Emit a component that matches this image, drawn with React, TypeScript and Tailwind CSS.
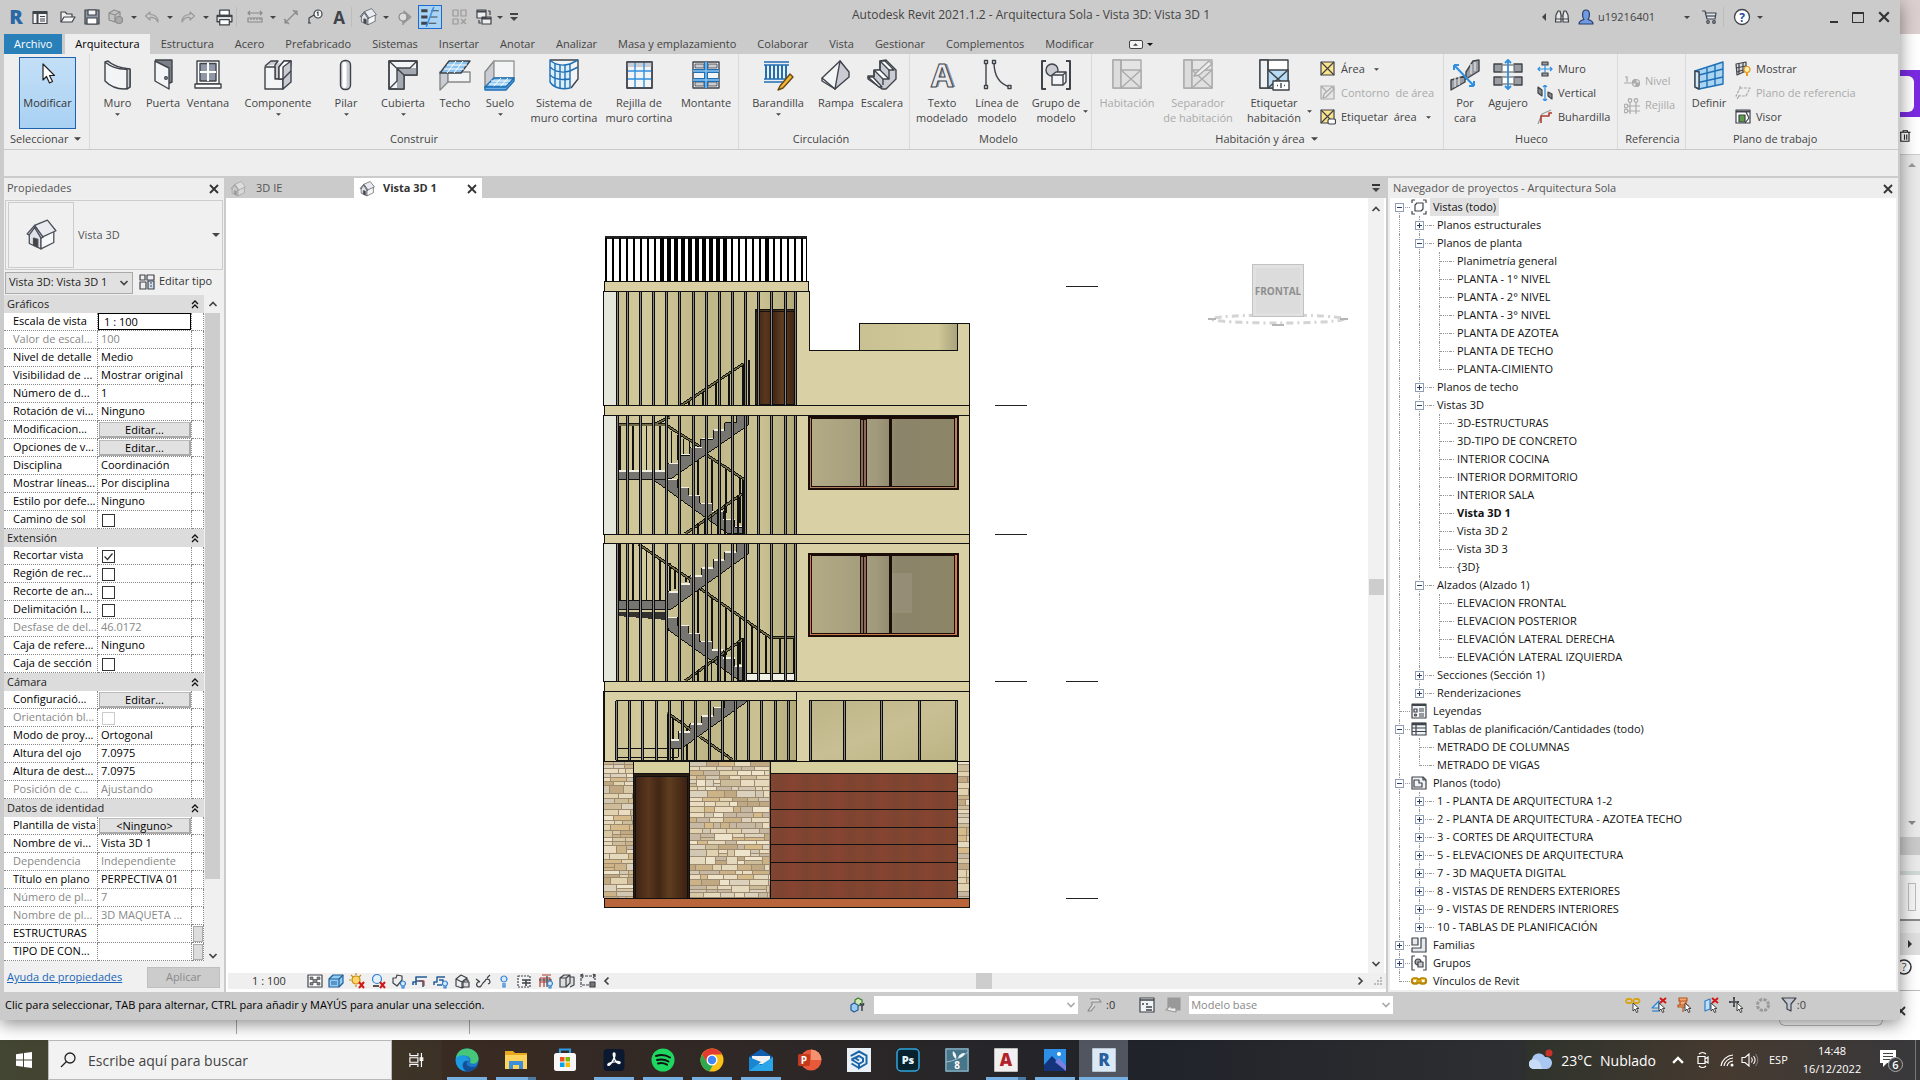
import React from "react";

type Kids = { children?: React.ReactNode };

const K = "#3f434a";
const B = "#1f6fb5";

function Big({ children }: Kids) {
  return (
    <svg viewBox="0 0 32 32" className="h-8 w-8 shrink-0" fill="none" stroke={K} strokeWidth="1.4" strokeLinejoin="round" aria-hidden="true">
      {children}
    </svg>
  );
}

function Sm({ children, className = "h-4 w-4" }: Kids & { className?: string }) {
  return (
    <svg viewBox="0 0 16 16" className={"shrink-0 " + className} fill="none" stroke={K} strokeWidth="1.2" strokeLinejoin="round" aria-hidden="true">
      {children}
    </svg>
  );
}

function Caret({ className = "h-[3px] w-[6px]", color = "#444" }: { className?: string; color?: string }) {
  return (
    <svg viewBox="0 0 6 3" className={"shrink-0 " + className} aria-hidden="true">
      <path d="M0 0h6L3 3z" fill={color} />
    </svg>
  );
}

function Cross({ className = "h-[10px] w-[10px]" }: { className?: string }) {
  return (
    <svg viewBox="0 0 10 10" className={"shrink-0 " + className} aria-hidden="true">
      <path d="M1 1l8 8M9 1L1 9" stroke="#333" strokeWidth="1.8" fill="none" />
    </svg>
  );
}

function Chevron({ dir, className = "h-[10px] w-[10px]", color = "#444" }: { dir: "up" | "down" | "left" | "right"; className?: string; color?: string }) {
  const d = { up: "M1.5 7L5 3.5 8.5 7", down: "M1.5 3L5 6.5 8.5 3", left: "M6.5 1.5L3 5l3.5 3.5", right: "M3.5 1.5L7 5 3.5 8.5" }[dir];
  return (
    <svg viewBox="0 0 10 10" className={"shrink-0 " + className} aria-hidden="true">
      <path d={d} stroke={color} strokeWidth="1.7" fill="none" />
    </svg>
  );
}

function House({ className = "h-5 w-5", faded = false }: { className?: string; faded?: boolean }) {
  const s = faded ? "#999" : "#4a4e57";
  return (
    <svg viewBox="0 0 30 30" className={"shrink-0 " + className} strokeLinejoin="round" stroke={s} strokeWidth="1.2" aria-hidden="true">
      <path d="M4 13v10l11 5V16L9 7z" fill={faded ? "#ccc" : "#dfe2e8"} />
      <path d="M15 16v12l12-6V11z" fill={faded ? "#d8d8d8" : "#f6f7f9"} />
      <path d="M9 6l12-5 8 10-13 6z" fill={faded ? "#ddd" : "#e9ebf0"} />
      <path d="M9 6l-7 8 2 1 5-7 6 10 2-1z" fill={faded ? "#ccc" : "#b4b9c4"} />
      <path d="M8 18v6.5l4 2V19z" fill={faded ? "#999" : "#444"} />
    </svg>
  );
}

/* ---------- Title bar ---------- */

function Divider() {
  return <span className="h-5 w-px bg-[#bdbdbd]" />;
}

function IconButton({ label, children, className = "w-6" }: Kids & { label: string; className?: string }) {
  return (
    <button type="button" aria-label={label} className={"flex h-6 shrink-0 items-center justify-center " + className}>
      {children}
    </button>
  );
}

function TitleBar() {
  return (
    <header className="flex h-[34px] items-center">
      <div className="flex items-center pl-1">
        <IconButton label="Revit" className="w-6">
          <span className="text-[20px] leading-none font-extrabold text-[#2a67a5]">R</span>
        </IconButton>
        <IconButton label="Inicio">
          <Sm><path d="M1 2.500h14v12H1z" fill="#f5f5f5" /><path d="M1 4h14M5.500 4v10" strokeWidth="2" /><path d="M8 7.500h5M8 10h5M8 12h5" /></Sm>
        </IconButton>
        <IconButton label="Abrir" className="ml-1 w-6">
          <Sm><path d="M1 13V3h4l2 2h5v3" fill="#eee" /><path d="M1 13l3-5h11l-3 5z" fill="#f4f4f4" /></Sm>
        </IconButton>
        <IconButton label="Guardar">
          <Sm><path d="M1 1h14v14H1z" fill="#8f96a3" /><path d="M4 1h8v5H4z" fill="#f4f4f4" /><path d="M3 9h10v6H3z" fill="#fff" /></Sm>
        </IconButton>
        <IconButton label="Sincronizar">
          <Sm><g stroke="#8d8d8d"><path d="M1 4l5-3 6 2v7l-5 3-6-2z" fill="#c2c2c2" /><path d="M1 4l6 2 5-3M7 6v7" /><circle cx="11" cy="11" r="3.500" fill="#aaa" /></g></Sm>
        </IconButton>
        <IconButton label="Opciones de sincronizar" className="w-3"><Caret /></IconButton>
        <IconButton label="Deshacer" className="w-6">
          <Sm><path d="M6 3L1.500 7 6 11V8.500c4-.5 6 .5 8 4.500 0-5-3-7.500-8-7.500z" stroke="#999" /></Sm>
        </IconButton>
        <IconButton label="Lista de deshacer" className="w-3"><Caret /></IconButton>
        <IconButton label="Rehacer" className="w-6">
          <Sm><path d="M10 3l4.500 4L10 11V8.500c-4-.5-6 .5-8 4.500 0-5 3-7.500 8-7.500z" stroke="#999" /></Sm>
        </IconButton>
        <IconButton label="Lista de rehacer" className="w-3"><Caret /></IconButton>
        <IconButton label="Imprimir">
          <Sm className="h-[17px] w-[17px]"><path d="M3.500 1h9v5h-9z" fill="#fff" /><path d="M1 6h14v6H1z" fill="#e4e4e4" /><path d="M3.500 10h9v5h-9z" fill="#fff" /><path d="M1 7h14" /></Sm>
        </IconButton>
        <Divider />
        <IconButton label="Medir" className="ml-1.5 w-6">
          <Sm><g stroke="#8a8a8a"><path d="M1 4h14M3 2L1 4l2 2M13 2l2 2-2 2M1 9h14v4H1zM4 9v2M7 9v2M10 9v2M13 9v2" /></g></Sm>
        </IconButton>
        <IconButton label="Opciones de medir" className="w-3"><Caret /></IconButton>
        <IconButton label="Cota alineada">
          <Sm><path d="M2 14L14 2M2 10v4h4M10 2h4v4M1 10l5 5M10 1l5 5" stroke="#8a8a8a" /></Sm>
        </IconButton>
        <IconButton label="Etiquetar por categoría">
          <Sm><circle cx="11" cy="5" r="4" fill="#f4f4f4" /><path d="M10 4l1-1v4M2 14V9l5-3M1 14h3" /></Sm>
        </IconButton>
        <IconButton label="Texto" className="w-6">
          <span className="text-[17px] leading-none font-bold text-[#3f434a]">A</span>
        </IconButton>
        <Divider />
        <IconButton label="Vista 3D" className="ml-1 w-6"><House className="h-[18px] w-[18px]" /></IconButton>
        <IconButton label="Opciones de vista 3D" className="w-3"><Caret /></IconButton>
        <IconButton label="Sección" className="w-6">
          <Sm><path d="M8 2l7 6-7 6z" fill="#999" stroke="#999" /><circle cx="7" cy="8" r="4" fill="#ddd" stroke="#888" /><path d="M7 12v4" stroke="#888" /></Sm>
        </IconButton>
        <IconButton label="Líneas finas" className="ml-0.5 w-6 border border-[#1f6ad0] bg-[#a9d3f5]">
          <Sm className="h-5 w-5"><path d="M1 3h5M1 8h5M1 13h5" strokeWidth="2.500" /><path d="M9 3h6M8 8h6M7 13h6" strokeWidth="0.800" /><path d="M11 0L5 16" stroke="#3b8ee0" /></Sm>
        </IconButton>
        <IconButton label="Cerrar vistas ocultas" className="ml-1.5 w-6">
          <Sm><g stroke="#999"><path d="M1 1h5v6H1zM9 1h5v6H9zM1 10h5v5H1zM9 10l5 5M14 10l-5 5" /></g></Sm>
        </IconButton>
        <IconButton label="Cambiar ventanas">
          <Sm><path d="M1 1h9v8H1zM6 8h9v7H6z" fill="#eee" /><path d="M1 2.500h9M6 9.500h9" strokeWidth="2" /><path d="M12 2h2v4M3 11v3h2" /></Sm>
        </IconButton>
        <IconButton label="Opciones de ventanas" className="w-2"><Caret /></IconButton>
        <IconButton label="Personalizar barra" className="w-5">
          <span className="flex flex-col items-center gap-0.5"><span className="h-[2px] w-2 bg-[#444]" /><Caret className="h-1 w-2" /></span>
        </IconButton>
      </div>
      <h1 className="-mt-1 flex-1 text-center text-[12px] whitespace-nowrap text-[#444]">Autodesk Revit 2021.1.2 - Arquitectura Sola - Vista 3D: Vista 3D 1</h1>
      <div className="flex items-center justify-end pr-0.5">
        <IconButton label="Contraer" className="w-3"><svg viewBox="0 0 4 8" className="h-2 w-1" aria-hidden="true"><path d="M4 0v8L0 4z" fill="#444" /></svg></IconButton>
        <IconButton label="Buscar">
          <Sm><path d="M2 6l2-4h2l1 4v7H1.500zM9 6l1-4h2l2 4 .5 7H9zM7 7h2v3H7z" fill="#e8e8e8" /><path d="M1.500 10H7M9 10h5.500" /></Sm>
        </IconButton>
        <IconButton label="Usuario">
          <Sm><path d="M1 15c0-3 3-4 5-4.500C4 8 3.500 1 8 1s4 7 2 9.500c2 .5 5 1.500 5 4.500z" fill="#6f9be0" stroke="#2b3f6b" /></Sm>
        </IconButton>
        <span className="mr-7 w-[57px] text-[11px] text-[#444]">u19216401</span>
        <IconButton label="Opciones de usuario" className="w-2"><Caret /></IconButton>
        <IconButton label="Tienda" className="ml-1 w-7">
          <Sm><path d="M1 2h3l2 8h8l1-6H5" fill="#dfe6f0" /><circle cx="7" cy="13" r="1.300" /><circle cx="13" cy="13" r="1.300" /><path d="M6 7h8" /></Sm>
        </IconButton>
        <Divider />
        <IconButton label="Ayuda" className="ml-1 w-7">
          <svg viewBox="0 0 18 18" className="h-[18px] w-[18px]" aria-hidden="true"><circle cx="9" cy="9" r="7.500" fill="#fff" stroke="#3f434a" strokeWidth="1.300" /><text x="9" y="13.500" textAnchor="middle" fontSize="12" fontWeight="700" fontFamily="Open Sans" fill="#1f4fa0">?</text></svg>
        </IconButton>
        <IconButton label="Opciones de ayuda" className="w-2"><Caret /></IconButton>
        <IconButton label="Minimizar" className="ml-[58px] w-6"><span className="mt-2.5 h-[2px] w-2 bg-[#333]" /></IconButton>
        <IconButton label="Maximizar" className="w-6"><span className="h-[11px] w-3 border border-t-2 border-[#333]" /></IconButton>
        <IconButton label="Cerrar" className="w-7"><Cross className="h-3 w-3" /></IconButton>
      </div>
    </header>
  );
}

const TABS = ["Estructura", "Acero", "Prefabricado", "Sistemas", "Insertar", "Anotar", "Analizar", "Masa y emplazamiento", "Colaborar", "Vista", "Gestionar", "Complementos", "Modificar"];

function RibbonTabs() {
  return (
    <nav className="flex h-5 items-stretch gap-px text-[11px] leading-5 whitespace-nowrap text-[#444]" aria-label="Fichas">
      <button type="button" className="mr-0.5 bg-[#2980b9] px-2.5 text-white">Archivo</button>
      <button type="button" className="bg-[#eee] px-2.5 text-black">Arquitectura</button>
      {TABS.map((t) => (
        <button key={t} type="button" className="px-2.5">{t}</button>
      ))}
      <button type="button" aria-label="Minimizar cinta" className="ml-6 flex items-center gap-1">
        <span className="flex h-[9px] w-[14px] items-center justify-center rounded-[2px] border border-[#444] bg-[#f4f4f4]"><Caret className="h-[3px] w-[5px] rotate-180" /></span>
        <Caret color="#111" />
      </button>
    </nav>
  );
}

/* ---------- Ribbon ---------- */

function Tool({ label, label2, w, icon, caret, sideCaret, off }: { label: string; label2?: string; w: string; icon: React.ReactNode; caret?: boolean; sideCaret?: boolean; off?: boolean }) {
  return (
    <button type="button" disabled={off} className={"relative flex shrink-0 flex-col items-center pt-[5px] text-[11px] leading-[15px] whitespace-nowrap " + w + (off ? " text-[#aaa]" : " text-[#444]")}>
      {icon}
      <span className="mt-1">{label}</span>
      {label2 && <span>{label2}</span>}
      {caret && <Caret className="mt-[3px] h-[3px] w-[5px]" />}
      {sideCaret && <span className="absolute right-0 bottom-4"><Caret className="block h-[3px] w-[5px]" /></span>}
    </button>
  );
}

function SmallTool({ label, icon, caret, off }: { label: string; icon: React.ReactNode; caret?: boolean; off?: boolean }) {
  return (
    <button type="button" disabled={off} className={"flex h-6 items-center gap-[5px] text-[11px] whitespace-pre " + (off ? "text-[#aaa]" : "text-[#444]")}>
      {icon}
      <span>{label}</span>
      {caret && <Caret className="ml-1 h-[3px] w-[5px]" />}
    </button>
  );
}

function Group({ title, w, caret, children }: Kids & { title: string; w: string; caret?: boolean }) {
  return (
    <section className={"flex flex-col border-r border-[#dadada] " + w}>
      <div className="flex flex-1">{children}</div>
      <h2 className="flex h-5 items-center justify-center gap-1.5 text-[11px] whitespace-nowrap text-[#444]">
        {title}
        {caret && <Caret className="h-1 w-[7px]" />}
      </h2>
    </section>
  );
}

const G1 = "#f3f4f6";
const G2 = "#c9ccd3";

function RoomIcon({ mode }: { mode: "off" | "sep" | "tag" }) {
  const s = mode === "tag" ? K : "#aaa";
  return (
    <Big>
      <g stroke={s}>
        <path d="M2 1h28v28H2z" fill={mode === "tag" ? "#fff" : "#e4e4e4"} />
        <path d="M2 1h8v28H2z" fill={mode === "tag" ? "#eef0f2" : "#dcdcdc"} />
        <path d="M10 11h20v18H10z" fill={mode === "tag" ? "#b7dcf3" : "#e0e0e0"} />
        <path d="M10 11l20 18M30 11L10 29M10 11V1" />
        {mode === "sep" && <path d="M14 14l13-12 3 3-13 11-5 1z" fill="#eee" />}
        {mode === "tag" && <path d="M15 22h16v9H15z" fill="#fff" />}
        {mode === "tag" && <path d="M23 24v5M19 26.500h1M26 26.500h1" />}
      </g>
    </Big>
  );
}

function Yellow({ kind }: { kind: "area" | "off" | "tag" }) {
  const s = kind === "off" ? "#aaa" : K;
  return (
    <Sm>
      <g stroke={s}>
        <path d="M1 1h13v13H1z" fill={kind === "off" ? "#e6e6e6" : "#fbe38b"} />
        {kind === "off" ? <path d="M3 13l1-4 8-7 2 2-8 8zM1 1l5 5" /> : <path d="M1 1l13 13M14 1L1 14" />}
        {kind === "tag" && <rect x="8" y="10" width="7.500" height="5" rx="1.500" fill="#fff" />}
      </g>
    </Sm>
  );
}

function Ribbon() {
  return (
    <div className="flex h-24 border-b border-[#c9c9c9] bg-[#eee]">
      <section className="flex w-[86px] flex-col border-r border-[#dadada]">
        <div className="flex flex-1 pt-[3px] pl-[15px]">
          <button type="button" className="flex h-[72px] w-[57px] flex-col items-center border border-[#1c62ae] bg-linear-to-b from-[#c3dff7] to-[#a9d1f3] text-[11px] leading-[15px] text-[#333]">
            <Big><path d="M11 6v16l3.500-3.500 3 6.500 3-1.500-3-6h5z" fill="#fff" stroke="#222" strokeWidth="1.200" /></Big>
            <span className="mt-[5px]">Modificar</span>
          </button>
        </div>
        <button type="button" className="flex h-5 items-center gap-1.5 pl-1.5 text-[11px] text-[#444]">Seleccionar<Caret className="h-1 w-[7px]" /></button>
      </section>

      <Group title="Construir" w="w-[649px] pr-[5px] pl-[5px]">
        <Tool label="Muro" w="w-[45px]" caret icon={<Big><path d="M3 3c7 6 14 8 25 7v18c-2 2-4 2-6 2C14 30 8 27 3 22z" fill={G1} /><path d="M25 10v20l3-2V10M3 3l3-1c5 5 12 7 22 8" fill={G2} /></Big>} />
        <Tool label="Puerta" w="w-[46px]" icon={<Big><path d="M8 1h17v22l-5 2" fill="#7b7f88" /><path d="M8 2l14 7v21L8 22z" fill={G1} /><circle cx="19" cy="19" r="1.300" fill="#fff" /></Big>} />
        <Tool label="Ventana" w="w-[44px]" icon={<Big><path d="M5 2h22v23H5z" fill="#fff" /><path d="M8 4.500h16V22H8z" fill="#9098a8" /><path d="M16 4v18M8 13h16" stroke="#fff" strokeWidth="2" /><path d="M3 25h26v4H3z" fill="#fff" /></Big>} />
        <Tool label="Componente" w="w-24" caret icon={<Big><path d="M3 7l6-5h7l-3 4v14h7l8-7 1-11" fill={G2} /><path d="M3 8h10v12h8v10H3z" fill={G1} /><path d="M17 8l5-6h7v21l-8 7V20h-4z" fill={G2} /><path d="M17 8l5-6h7l-8 6v12h-4z" fill="#fff" /><path d="M21 20l8-8" /></Big>} />
        <Tool label="Pilar" w="w-10" caret icon={<Big><rect x="10.500" y="1.500" width="10" height="29" rx="4.500" fill={G2} /><rect x="12.500" y="3" width="4" height="26" rx="2" fill="#fff" stroke="none" /></Big>} />
        <Tool label="Cubierta" w="w-[74px]" caret icon={<Big><path d="M2 2h28v14H17v14H2z" fill={G1} /><path d="M10 9h20v7H17v14h-7z" fill="#a4a8b0" stroke="none" /><path d="M2 2h28v14H17v14H2zM2 2l15 14M10 9v13L2 30M10 9h13l7-7" /></Big>} />
        <Tool label="Techo" w="w-[30px]" icon={<Big><path d="M1 13V31l8-8V13z" fill={G2} stroke="#888" /><path d="M9 13h22V23H9z" fill={G1} stroke="#888" /><path d="M10 2h21l-9 12H1z" fill="#8cc4ef" stroke={K} /><path d="M8 6h20M5 10h20M17 2L8 14M24 2l-9 12" stroke="#fff" strokeWidth="1" /></Big>} />
        <Tool label="Suelo" w="w-[60px]" caret icon={<Big><path d="M1 13L10 2v17L1 29z" fill={G2} stroke="#888" /><path d="M10 2h20v17H10z" fill={G1} stroke="#999" /><path d="M10 19h20l-8 9H1z" fill="#8cc4ef" stroke={B} /><path d="M7 22h20M5 25h19M17 19l-8 9M24 19l-8 9" stroke="#fff" strokeWidth="1" /><path d="M1 28v3h21l8-9v-3l-8 9z" fill="#6fb0e4" stroke={B} /></Big>} />
        <Tool label="Sistema de" label2="muro cortina" w="w-[68px]" icon={<Big><path d="M2 1h28v19l-7 9" fill={G1} /><path d="M2 1c5 5 13 6 20 4v24C14 31 6 29 2 23z" fill="#dbeefb" stroke={B} /><path d="M7 4v23M12 6v23M17 6v24M2 8c5 5 13 6 20 4M2 16c5 5 13 5 20 4M22 5l8-4M22 12l8-4" stroke={B} /></Big>} />
        <Tool label="Rejilla de" label2="muro cortina" w="w-[82px]" icon={<Big><path d="M4 3h25v26H4z" fill={G1} /><path d="M4 3h25v5H4z" fill={G2} stroke="none" /><path d="M12 3v26M21 3v26M4 12h25M4 20h25" stroke="#2f8fe0" /><path d="M4 3h25v26H4z" /></Big>} />
        <Tool label="Montante" w="w-[52px]" icon={<Big><path d="M3 3h26v26H3z" fill={G1} /><path d="M5 5h9v4H5zM18 5h9v4h-9zM5 23h9v4H5zM18 23h9v4h-9z" fill={G2} strokeWidth="0.800" /><path d="M3 12h26M3 21h26M16 3v26" stroke={B} strokeWidth="4" /><path d="M3 12h26M3 21h26M16 3v26" stroke="#8cc4ef" strokeWidth="1.500" /></Big>} />
      </Group>

      <Group title="Circulación" w="w-[171px] pr-3 pl-[6px]">
        <Tool label="Barandilla" w="w-[66px]" caret icon={<Big><path d="M2 3h25M2 6h25M2 20h25M2 23h25" stroke={B} strokeWidth="1.600" /><path d="M4 6v14M8 6v14M12 6v14M16 6v14M20 6v14M24 6v14" stroke={B} strokeWidth="2" /><path d="M18 27L28 15l3 3-10 11-5 2z" fill="#f6b63a" stroke="#6b4a12" /></Big>} />
        <Tool label="Rampa" w="w-[50px]" icon={<Big><path d="M2 19L20 2l8 11-13 17z" fill={G1} /><path d="M20 2l9 11v5L15 30z" fill={G2} /><path d="M2 19v3l13 8" /></Big>} />
        <Tool label="Escalera" w="w-[42px]" icon={<Big><path d="M14 2l6-1 10 10v9L20 30h-4L2 20v-3h6v-5l6-1z" fill={G2} /><path d="M14 2h5l9 9h-5zM8 11h6l9 9h-6zM2 18h5l9 10h-3z" fill="#fff" /><path d="M14 2v9M8 11v7M23 11v9M17 20v6" /></Big>} />
      </Group>

      <Group title="Modelo" w="w-[182px] pr-2 pl-1">
        <Tool label="Texto" label2="modelado" w="w-14" icon={<span className="flex h-8 w-8 items-center justify-center text-[32px] leading-8 font-bold text-[#e9ebef] [-webkit-text-stroke:1px_#3f434a] [text-shadow:2px_0_0_#8d929c]" aria-hidden="true">A</span>} />
        <Tool label="Línea de" label2="modelo" w="w-[54px]" icon={<Big><path d="M5 3v25M13 3c0 13 5 22 16 25" /><path d="M3.500 1.500h3v3h-3zM3.500 26.500h3v3h-3zM11.500 1.500h3v3h-3zM27 26.500h3v3h-3z" fill="#fff" /></Big>} />
        <Tool label="Grupo de" label2="modelo" w="w-16" sideCaret icon={<Big><path d="M6 2H2v28h4M26 2h4v28h-4" strokeWidth="2" /><circle cx="12" cy="11" r="6" fill={G2} /><path d="M12 16l4-3h10v10l-3 3H12z" fill={G1} /><path d="M12 16h11v10M23 16l3-3" /></Big>} />
      </Group>

      <Group title="Habitación y área" w="w-[352px] pr-1 pl-[2px]" caret>
        <Tool off label="Habitación" w="w-[66px]" icon={<RoomIcon mode="off" />} />
        <Tool off label="Separador" label2="de habitación" w="w-[76px]" icon={<RoomIcon mode="sep" />} />
        <Tool label="Etiquetar" label2="habitación" w="w-[76px]" sideCaret icon={<RoomIcon mode="tag" />} />
        <div className="flex flex-col pt-[3px] pl-2">
          <SmallTool label="Área" caret icon={<Yellow kind="area" />} />
          <SmallTool off label="Contorno  de área" icon={<Yellow kind="off" />} />
          <SmallTool label="Etiquetar  área" caret icon={<Yellow kind="tag" />} />
        </div>
      </Group>

      <Group title="Hueco" w="w-[174px] pl-[2px]">
        <Tool label="Por" label2="cara" w="w-[38px]" icon={<Big><path d="M2 21l14-4v6L2 31zM17 13L24 2l6-1v11l-13 8z" fill="#9a9da3" /><path d="M6 19v9M10 18v8M22 5v10M26 3v9" stroke="#ddd" /><path d="M5 6l20 21M5 6v5M5 6h5M25 27v-5M25 27h-5" stroke="#2f8fe0" strokeWidth="2" /></Big>} />
        <Tool label="Agujero" w="w-12" icon={<Big><path d="M2 5h8v8H2zM22 5h8v8h-8zM2 18h8v8H2zM22 18h8v8h-8z" fill="#9a9da3" /><path d="M10 6h12v7H10zM10 18h12v7H10z" fill="#fff" stroke="#888" /><path d="M16 1v29M13 4l3-3 3 3M13 27l3 3 3-3" stroke="#2f8fe0" strokeWidth="1.800" /></Big>} />
        <div className="flex flex-col pt-[3px] pl-[5px]">
          <SmallTool label="Muro" icon={<Sm><path d="M5 1h6v3H5zM5 12h6v3H5z" fill="#999" /><path d="M1 8h14M8 4v8M3 6L1 8l2 2M13 6l2 2-2 2" stroke="#2f8fe0" /></Sm>} />
          <SmallTool label="Vertical" icon={<Sm><path d="M1 2l4 3v6l-4-3zM11 7l4 2v5l-4-3z" fill="#888" /><path d="M8 0v16M6 2l2-2 2 2M6 14l2 2 2-2" stroke="#2f8fe0" /></Sm>} />
          <SmallTool label="Buhardilla" icon={<Sm><path d="M1 15L5 5l9-4" stroke="#999" /><path d="M4 14V7h8V4h3" stroke="#b0392c" strokeWidth="1.600" /></Sm>} />
        </div>
      </Group>

      <Group title="Referencia" w="w-[68px] pl-[6px] pr-1">
        <div className="flex flex-col justify-center pt-1">
          <SmallTool off label="Nivel" icon={<Sm><g stroke="#aaa"><path d="M0 9h8M3 3v5M1 3h3" /><circle cx="12" cy="9" r="3.500" /><path d="M12 5.500V9h3.500a3.500 3.500 0 0 1-3.500 3.500V9H8.500A3.500 3.500 0 0 1 12 5.500z" fill="#aaa" /></g></Sm>} />
          <SmallTool off label="Rejilla" icon={<Sm><g stroke="#aaa"><circle cx="6" cy="2.500" r="1.800" /><circle cx="12" cy="2.500" r="1.800" /><circle cx="2" cy="8" r="1.800" /><circle cx="2" cy="13" r="1.800" /><path d="M6 4v12M12 4v12M4 8h12M4 13h12" /></g></Sm>} />
        </div>
      </Group>

      <section className="flex flex-1 flex-col pl-[3px]">
        <div className="flex flex-1">
          <Tool label="Definir" w="w-10" icon={<Big><path d="M2 12l28-9v22L6 30l-4-2z" fill="#a9d4f2" stroke={B} /><path d="M6 12v18M14 9v19M22 6v20M2 17l28-7M3 24l27-6" stroke={B} /><path d="M2 12v16l4 2V13z" fill="#d5ebfa" stroke={K} /></Big>} />
          <div className="flex flex-col pt-[3px] pl-1.5">
            <SmallTool label="Mostrar" icon={<Sm><path d="M1 3l10-2v9l-9 4z" fill="#ddd" /><path d="M4 2v11M8 2v9M1 7l10-2M2 11l9-3" /><circle cx="12" cy="8.500" r="3" fill="#fff0b5" stroke="#e79a1c" /><path d="M12 12v3" stroke="#e79a1c" strokeWidth="2" /></Sm>} />
            <SmallTool off label="Plano de referencia" icon={<Sm><path d="M5 3h10l-4 8H1zM2 14l3-4M5 1v4" stroke="#aaa" strokeDasharray="3 1" /></Sm>} />
            <SmallTool label="Visor" icon={<Sm><path d="M1 1h14v13H1z" fill="#fff" /><path d="M1 2.500h14" strokeWidth="2" /><path d="M4 6h6v7H4z" fill="#5d9c49" /><path d="M11 3l3 6-4 5" /></Sm>} />
          </div>
        </div>
        <h2 className="flex h-5 items-center pl-11 text-[11px] text-[#444]">Plano de trabajo</h2>
      </section>
    </div>
  );
}

/* ---------- Properties palette ---------- */

type Prop = { n: string; v?: string; kind?: "edit" | "focus" | "btn" | "check" | "checked" | "side"; off?: boolean };

const PROPS: { title: string; rows: Prop[] }[] = [
  {
    title: "Gráficos",
    rows: [
      { n: "Escala de vista", v: "1 : 100", kind: "focus" },
      { n: "Valor de escal...", v: "100", off: true },
      { n: "Nivel de detalle", v: "Medio" },
      { n: "Visibilidad de ...", v: "Mostrar original" },
      { n: "Número de d...", v: "1" },
      { n: "Rotación de vi...", v: "Ninguno" },
      { n: "Modificacion...", v: "Editar...", kind: "btn" },
      { n: "Opciones de v...", v: "Editar...", kind: "btn" },
      { n: "Disciplina", v: "Coordinación" },
      { n: "Mostrar líneas...", v: "Por disciplina" },
      { n: "Estilo por defe...", v: "Ninguno" },
      { n: "Camino de sol", kind: "check" },
    ],
  },
  {
    title: "Extensión",
    rows: [
      { n: "Recortar vista", kind: "checked" },
      { n: "Región de rec...", kind: "check" },
      { n: "Recorte de an...", kind: "check" },
      { n: "Delimitación l...", kind: "check" },
      { n: "Desfase de del...", v: "46.0172", off: true },
      { n: "Caja de refere...", v: "Ninguno" },
      { n: "Caja de sección", kind: "check" },
    ],
  },
  {
    title: "Cámara",
    rows: [
      { n: "Configuració...", v: "Editar...", kind: "btn" },
      { n: "Orientación bl...", kind: "check", off: true },
      { n: "Modo de proy...", v: "Ortogonal" },
      { n: "Altura del ojo", v: "7.0975" },
      { n: "Altura de dest...", v: "7.0975" },
      { n: "Posición de c...", v: "Ajustando", off: true },
    ],
  },
  {
    title: "Datos de identidad",
    rows: [
      { n: "Plantilla de vista", v: "<Ninguno>", kind: "btn" },
      { n: "Nombre de vi...", v: "Vista 3D 1" },
      { n: "Dependencia", v: "Independiente", off: true },
      { n: "Título en plano", v: "PERPECTIVA 01" },
      { n: "Número de pl...", v: "7", off: true },
      { n: "Nombre de pl...", v: "3D MAQUETA ...", off: true },
      { n: "ESTRUCTURAS", v: "", kind: "side" },
      { n: "TIPO DE CON...", v: "", kind: "side" },
    ],
  },
];

function PropValue({ p, id }: { p: Prop; id: string }) {
  if (p.kind === "btn") {
    return <button type="button" id={id} className="ml-px block h-4 w-[92px] border border-t-[#bbb] border-r-2 border-b-2 border-[#aaa] bg-[#e1e1e1] text-center leading-[13px]">{p.v}</button>;
  }
  if (p.kind === "check" || p.kind === "checked") {
    return (
      <span className="relative mt-px ml-1 block h-[13px] w-[13px]">
        <input id={id} type="checkbox" defaultChecked={p.kind === "checked"} disabled={p.off} className={"block h-[13px] w-[13px] appearance-none border bg-white " + (p.off ? "border-[#ccc]" : "border-[#333]")} />
        {p.kind === "checked" && (
          <svg viewBox="0 0 13 13" className="pointer-events-none absolute inset-0" aria-hidden="true"><path d="M2.500 6.500l3 3 5-6" stroke="#333" strokeWidth="1.300" fill="none" /></svg>
        )}
      </span>
    );
  }
  const focus = p.kind === "focus";
  return (
    <input
      id={id}
      type="text"
      defaultValue={p.v}
      disabled={p.off}
      className={"block w-full bg-transparent " + (focus ? "h-[17px] border border-black bg-white px-[5px] pb-px leading-[14px]" : "h-[17px] px-[3px] pb-0.5 leading-[15px]")}
    />
  );
}

function Properties() {
  return (
    <aside className="flex w-[220px] shrink-0 flex-col bg-[#f0f0f0] text-[11px] text-[#222]">
      <div className="flex h-5 items-center justify-between bg-[#eee] pt-px pr-[3px] pl-[3px] text-[#555]">
        <h2>Propiedades</h2>
        <button type="button" aria-label="Cerrar propiedades" className="p-0.5"><Cross /></button>
      </div>
      <button type="button" className="mx-px mt-0.5 flex h-[70px] items-center border border-[#ccc] pr-[2px] pl-[2px] text-left text-[#555]">
        <span className="flex h-[66px] w-[66px] items-center justify-center border border-[#ccc]"><House className="h-8 w-8" /></span>
        <span className="ml-1 flex-1">Vista 3D</span>
        <Caret className="h-1 w-2" />
      </button>
      <div className="flex h-[25px] items-center pl-px">
        <div className="relative w-[128px]">
          <select aria-label="Filtro de propiedades" className="block h-[22px] w-full appearance-none border border-[#aaa] bg-[#e1e1e1] pl-[3px]">
            <option>Vista 3D: Vista 3D 1</option>
          </select>
          <span className="pointer-events-none absolute top-1.5 right-1"><Chevron dir="down" className="block h-[10px] w-[10px]" /></span>
        </div>
        <button type="button" className="mb-0.5 ml-1.5 flex items-center gap-1 text-[#333]">
          <Sm><path d="M1 1h5v5H1zM8 1h7v5H8zM1 8h6v7H1z" fill="#eee" /><path d="M9 7h6v8H9z" fill="#cfe0f2" /><path d="M11 9h2M11 12h2" /></Sm>
          Editar tipo
        </button>
      </div>
      <div className="flex flex-1">
        <table className="w-[200px] table-fixed border-separate border-spacing-0 self-start bg-white">
          <colgroup><col className="w-[94px]" /><col className="w-[94px]" /><col className="w-3" /></colgroup>
          {PROPS.map((g, gi) => (
            <tbody key={g.title}>
              <tr>
                <th colSpan={3} className="h-[18px] bg-[#dcdcdc] p-0 text-left font-normal">
                  <span className="flex h-[18px] items-center justify-between pr-[5px] pl-[3px]">
                    {g.title}
                    <button type="button" aria-label={"Contraer " + g.title}><svg viewBox="0 0 8 9" className="h-[9px] w-2" aria-hidden="true"><path d="M1 4l3-3 3 3M1 8l3-3 3 3" stroke="#111" strokeWidth="1.300" fill="none" /></svg></button>
                  </span>
                </th>
              </tr>
              {g.rows.map((r, i) => {
                const id = "p" + gi + "-" + i;
                return (
                  <tr key={r.n} className={r.off ? "text-[#888]" : "text-black"}>
                    <td className="h-[18px] border-r border-b border-dotted border-[#888] p-0 pl-[9px] whitespace-nowrap"><label htmlFor={id} className="block h-[17px] leading-[15px]">{r.n}</label></td>
                    <td className="h-[18px] border-r border-b border-dotted border-[#888] p-0"><PropValue p={r} id={id} /></td>
                    <td className="h-[18px] border-r border-b border-dotted border-[#888] p-0">
                      {r.kind === "side" && <button type="button" aria-label={"Editar " + r.n} className="ml-px block h-4 w-[10px] border border-[#aaa] bg-[#ddd]" />}
                    </td>
                  </tr>
                );
              })}
            </tbody>
          ))}
        </table>
        <div className="ml-px flex w-[15px] flex-col items-center justify-between pt-1">
          <Chevron dir="up" />
          <div className="mt-1 mb-[72px] w-full flex-1 bg-[#cdcdcd]" />
          <Chevron dir="down" />
        </div>
      </div>
      <div className="flex h-[31px] items-center justify-between pt-0.5 pr-1 pl-[3px]">
        <a href="#ayuda" className="text-[#1a66b8] underline">Ayuda de propiedades</a>
        <button type="button" disabled className="h-[21px] w-[73px] border border-[#bfbfbf] bg-[#ccc] text-[#8a8a8a]">Aplicar</button>
      </div>
    </aside>
  );
}

/* ---------- 3D view ---------- */

const BARS = [82, 112, 151, 190, 230, 269, 310, 349, 388, 427, 466, 506, 545, 586, 616];
const LOW_BARS = [80, 119, 158, 199, 240, 277, 317, 358, 397, 436, 476, 515, 556, 596];
const STONE = ["#d9c8a6", "#e4d8bd", "#cbb387", "#d2c7b2", "#eee4cc", "#c0a882", "#dbd1bd", "#cdbc99", "#e9dcc0", "#c6b8a3", "#d6ba8a", "#e2d3b0"];

function stones(x0: number, x1: number, y0: number, y1: number, seed: number) {
  let s = seed;
  const rnd = () => {
    s = (s * 16807) % 2147483647;
    return s / 2147483647;
  };
  rnd();
  const out: { x: number; y: number; w: number; h: number; c: string }[] = [];
  let y = y0;
  while (y < y1) {
    const h = Math.min(4 + Math.floor(rnd() * 5), y1 - y);
    let x = x0;
    while (x < x1) {
      const w = Math.min(7 + Math.floor(rnd() * 14), x1 - x);
      const c = STONE[Math.floor(rnd() * STONE.length)];
      if (h > 6 && rnd() > 0.6) {
        out.push({ x, y, w, h: 4, c });
        out.push({ x, y: y + 4, w, h: h - 4, c: STONE[Math.floor(rnd() * STONE.length)] });
      } else {
        out.push({ x, y, w, h, c });
      }
      x += w;
    }
    y += h;
  }
  return out;
}

const STONES = [...stones(603, 634, 761, 898, 7), ...stones(689, 770, 761, 898, 4117), ...stones(958, 970, 761, 898, 99)];

function Bars({ xs, y1, y2 }: { xs: number[]; y1: number; y2: number }) {
  return (
    <g>
      {xs.map((x) => (
        <g key={x}>
          <path d={`M${x} ${y1}V${y2}`} stroke="#0d0d0d" strokeWidth="9" />
          <path d={`M${x} ${y1}V${y2}`} stroke="#858585" strokeWidth="3" />
        </g>
      ))}
    </g>
  );
}

function Rail({ d }: { d: string }) {
  return (
    <g fill="none">
      <path d={d} stroke="#15140d" strokeWidth="9" />
      <path d={d} stroke="#6f6a4a" strokeWidth="4" />
    </g>
  );
}

function balusters(x0: number, x1: number, step: number, top: (x: number) => number, bottom: (x: number) => number) {
  let d = "";
  for (let x = x0; x <= x1; x += step) d += `M${x} ${top(x)}V${bottom(x)}`;
  return d;
}

function Building() {
  const wall = "#d9d0a6";
  return (
    <g shapeRendering="crispEdges">
      {/* Roof railing */}
      <path d="M605 237H807" stroke="#222" strokeWidth="3" />
      {Array.from({ length: 29 }, (_, i) => (
        <path key={i} d={`M${606 + i * 7} 238V281`} stroke="#000" strokeWidth={(i >= 8 && i <= 17) || i === 23 ? 4 : 2} />
      ))}
      <path d="M806 238V281" stroke="#000" strokeWidth="1" />
      {/* Walls */}
      <g stroke="#111" strokeWidth="1">
        <path d="M603.5 291.500H809.500V350.500H859.500V323.500H969.500V405.500H603.500z" fill={wall} />
        <path d="M859.500 323.500H957.500V350.500H859.500z" fill="url(#box)" />
        <path d="M603.500 415.500H969.500V534.500H603.500zM603.500 543.500H969.500V681.500H603.500zM604.500 691.500H969.500V761.500H604.500z" fill={wall} />
        <path d="M603.500 291.500H617V405.500H603.500zM603.500 415.500H617V534.500H603.500zM603.500 543.500H617V681.500H603.500z" fill="#e5e6dc" />
        <path d="M617 291.500H796.500V405.500H617zM617 415.500H796.500V534.500H617zM617 543.500H796.500V681.500H617zM616 700.500H796.500V760.500H616z" fill="url(#back)" />
        <path d="M809.500 700.500H957.500V760.500H809.500z" fill="url(#glass0)" />
      </g>
      {/* Stairs, top floors */}
      <g transform="translate(590 220) scale(.33333)" strokeLinejoin="miter">
        <path d="M497 268H618V555H497z" fill="url(#wood)" stroke="#111" strokeWidth="4" />
        <path d="M497 274H618" stroke="#111" strokeWidth="3" />
        <path d={balusters(298, 462, 40, (x) => 555 - (x - 275) * 0.68, () => 555) + "M338 520V555M460 430V555M478 420V555"} stroke="#111" strokeWidth="6" />
        <Rail d="M275 555L462 430" />
        <path d={balusters(90, 225, 20, () => 615, () => 755)} stroke="#111" strokeWidth="5" />
        <path d={balusters(245, 300, 18, (x) => 625 + (x - 230) * 0.6, (x) => 730 - (x - 245) * 0.6)} stroke="#111" strokeWidth="5" />
        <path d={balusters(325, 460, 42, (x) => 690 + (x - 330) * 0.66, (x) => 825 + (x - 325) * 0.66)} stroke="#111" strokeWidth="5" />
        <path d="M82 755H230V778H82zM232 732H265V706H300V682H333V658H370V632H404V608H440V588H475V615L245 775H232zM230 778H262V802H297V826H330V850H367V874H400V898H435V922H462V942H415L188 778z" fill="#77756f" stroke="#111" strokeWidth="3" />
        <path d="M82 753H225M236 730H263M268 704H300M303 682H336M336 656H368M372 630H402M232 778H262M264 802H297M298 826H330M332 850H366M366 874H400M400 898H435M435 920H462" stroke="#f3f1e4" strokeWidth="4" />
        <Rail d="M82 615H228L330 680M195 613L240 590M350 705L462 778" />
        <Rail d="M285 942L462 818" />
        <path d={balusters(325, 450, 20, (x) => 930 - (x - 300) * 0.7, () => 942) + "M460 780V942M385 880V942"} stroke="#111" strokeWidth="5" />
        <Bars xs={BARS} y1={213} y2={555} />
        <Bars xs={BARS} y1={588} y2={942} />
      </g>
      {/* Stairs, lower floors */}
      <g transform="translate(590 530) scale(.33333)">
        <path d="M470 430H616V453H470z" fill="#f2f1e6" stroke="#111" strokeWidth="3" />
        <path d={balusters(90, 225, 20, (x) => (x < 150 ? 42 : 42 + (x - 150) * 0.7), () => 212)} stroke="#111" strokeWidth="5" />
        <path d={balusters(240, 300, 16, (x) => 100 + (x - 240) * 0.7, (x) => 186 - (x - 240) * 0.6)} stroke="#111" strokeWidth="5" />
        <path d={balusters(325, 460, 42, (x) => 175 + (x - 330) * 0.7, (x) => 320 + (x - 325) * 0.66)} stroke="#111" strokeWidth="5" />
        <path d={balusters(486, 612, 42, (x) => Math.min(322, 280 + (x - 480) * 0.8), () => 430)} stroke="#111" strokeWidth="5" />
        <path d="M82 212H230V240H82zM232 186H265V162H300V138H335V114H370V90H404V66H440V42H475V72L240 240H232zM230 262H262V286H297V310H330V335H367V360H400V384H435V408H462V453H450L235 300z" fill="#77756f" stroke="#111" strokeWidth="3" />
        <path d="M82 245H230V270L82 258z" fill="#33322f" />
        <path d="M236 186H263M268 162H300M303 138H336M336 114H368M372 90H402M405 66H438M232 262H262M264 286H297M298 310H330M332 335H366M366 360H400M400 384H435M435 408H462" stroke="#f3f1e4" strokeWidth="4" />
        <Rail d="M145 42L300 148M330 175L540 322H616" />
        <Rail d="M285 453L462 325" />
        <path d={balusters(325, 450, 20, (x) => 430 - (x - 310) * 0.7, () => 453) + "M460 325V453"} stroke="#111" strokeWidth="5" />
        <Bars xs={BARS} y1={42} y2={453} />
        <path d="M82 655H265V682H82" fill="none" stroke="#111" strokeWidth="3" />
        <path d="M235 545V690M250 560V690M292 590V690" stroke="#111" strokeWidth="5" />
        <path d="M232 630H265V606H300V582H335V558H370V532H404V512H475L275 655H232z" fill="#77756f" stroke="#111" strokeWidth="3" />
        <path d="M236 630H266M268 606H300M303 582H336M336 558H368M372 532H402" stroke="#f3f1e4" strokeWidth="4" />
        <Rail d="M232 548L300 598M330 620L428 690" />
        <Bars xs={LOW_BARS} y1={512} y2={690} />
        <Bars xs={[661, 763, 876, 988, 1100]} y1={512} y2={690} />
      </g>
      {/* Windows */}
      {[{ y: 416, h: 72, top: "#b08163" }, { y: 553, h: 82, top: "#d0794b" }].map((w) => (
        <g key={w.y} stroke="#1a0d08">
          <rect x="808.500" y={w.y + 0.5} width="149" height={w.h} fill={w.top} strokeWidth="2" />
          <rect x="811.500" y={w.y + 2.500} width="143" height={w.h - 4} fill="url(#glass)" />
          <rect x="860" y={w.y + 3} width="6" height={w.h - 5} fill="#8a6a5a" />
          <path d={`M863.5 ${w.y + 3}V${w.y + w.h - 2}`} />
          <path d={`M890 ${w.y + 3}V${w.y + w.h - 2}`} strokeWidth="3" />
        </g>
      ))}
      <rect x="892" y="573" width="20" height="40" fill="#fff" opacity=".08" />
      {/* Slabs */}
      <g stroke="#111" fill="#d9cfa3">
        <path d="M604.500 281.500H808.500V291.500H604.500zM604.500 405.500H969.500V415.500H604.500zM604.500 534.500H969.500V543.500H604.500zM604.500 681.500H969.500V691.500H604.500z" />
        <path d="M796.500 691V761M603.500 691V761" />
      </g>
      {/* Ground floor */}
      <rect x="603" y="761" width="367" height="137" fill="#9c8b70" />
      {STONES.map((s, i) => (
        <rect key={i} x={s.x} y={s.y} width={Math.max(s.w - 1, 1)} height={Math.max(s.h - 1, 1)} fill={s.c} />
      ))}
      <g stroke="#111">
        <path d="M633.500 761.500H689.500V773.500H633.500zM770.500 761.500H957.500V773.500H770.500z" fill="#d8cf9f" />
        <path d="M633.500 773.500H689.500V898.500H633.500z" fill="#2b1c14" />
        <path d="M635.500 776.500H687.500V898.500H635.500z" fill="url(#wood)" />
        <path d="M770.500 773.500H957.500V898.500H770.500z" fill="url(#garage)" />
        <path d="M770 791.500H958M770 809.500H958M770 827.500H958M770 844.500H958M770 862.500H958M770 880.500H958M603.500 761V898M603 761.500H970M969.500 761V898" />
        <path d="M604.500 898.500H969.500V907.500H604.500z" fill="#b8653b" />
      </g>
    </g>
  );
}

function Canvas() {
  return (
    <svg viewBox="226 198 1142 774" preserveAspectRatio="xMinYMin meet" className="min-w-0 flex-1 bg-white" role="img" aria-label="Vista frontal del edificio">
      <defs>
        <linearGradient id="back" x1="0" x2="1"><stop offset="0" stopColor="#c9c191" /><stop offset=".15" stopColor="#d2ca9c" /><stop offset=".5" stopColor="#bfb687" /><stop offset=".8" stopColor="#cbc294" /><stop offset="1" stopColor="#b3aa7a" /></linearGradient>
        <linearGradient id="box" x1="0" x2="1"><stop offset="0" stopColor="#c9c193" /><stop offset=".8" stopColor="#d0c898" /><stop offset="1" stopColor="#a9a27c" /></linearGradient>
        <linearGradient id="glass0" x1="0" x2="1" y2="1"><stop offset="0" stopColor="#bdb487" /><stop offset=".5" stopColor="#c8c094" /><stop offset="1" stopColor="#bcb384" /></linearGradient>
        <linearGradient id="glass" x1="0" x2="1"><stop offset="0" stopColor="#b3ab85" /><stop offset=".45" stopColor="#a19a7c" /><stop offset=".6" stopColor="#8c846a" /><stop offset="1" stopColor="#8d8567" /></linearGradient>
        <linearGradient id="wood" x1="0" x2="1"><stop offset="0" stopColor="#3f2415" /><stop offset=".25" stopColor="#5a371e" /><stop offset=".45" stopColor="#432715" /><stop offset=".65" stopColor="#5f3d1f" /><stop offset="1" stopColor="#3b2012" /></linearGradient>
        <linearGradient id="garage" x1="0" x2=".12" spreadMethod="reflect"><stop offset="0" stopColor="#84452f" /><stop offset=".4" stopColor="#7c4431" /><stop offset="1" stopColor="#874431" /></linearGradient>
      </defs>
      <Building />
      <path d="M1066 286.500h32M995 405.500h32M995 534.500h32M995 681.500h32M1066 681.500h32M1066 898.500h32" stroke="#222" shapeRendering="crispEdges" />
      <g>
        <ellipse cx="1278" cy="319" rx="66" ry="4" fill="none" stroke="#d4d4d4" strokeWidth="3" strokeDasharray="7 4 2 4" />
        <path d="M1208 319h8M1340 319h8M1272 325h12" stroke="#b5b5b5" strokeWidth="2" />
        <rect x="1252.500" y="264.500" width="51" height="52" fill="#e1e1e1" stroke="#c2c2c2" />
        <rect x="1256" y="268" width="44" height="45" fill="#dcdcdc" />
        <text x="1278" y="295" textAnchor="middle" fontFamily="Open Sans, sans-serif" fontWeight="700" fontSize="10" fill="#8f8f8f">FRONTAL</text>
      </g>
    </svg>
  );
}

const HOUSEISH = <path d="M2 6l5-4 6 3v7l-5 3-6-2zM2 6l6 3 5-4M8 9v6" fill="#eee" />;
const BULB = <path d="M12 8a2.500 2.500 0 1 1-.1 0M11 13v2h2v-2" stroke="#2f7fd0" fill="#d5e9fb" />;
const REDX = <path d="M10 9l5 6M15 9l-5 6" stroke="#d01818" strokeWidth="2" />;

const VIEW_TOOLS: [string, React.ReactNode][] = [
  ["Nivel de detalle", <><path d="M1 2h14v12H1z" fill="#fff" /><path d="M3 4h3v2.500H3zM10 4h3v2.500h-3zM6 6.500h4v3H6zM3 9.500h3V12H3zM10 9.500h3V12h-3z" fill="#888" strokeWidth="0.600" /></>],
  ["Estilo visual", <><path d="M1 6l4-4h10v8l-4 4H1z" fill="#8fcdf4" stroke="#245d95" /><path d="M1 6h10v8M11 6l4-4M3 9h6M3 11h6" stroke="#245d95" /></>],
  ["Camino de sol", <><circle cx="7" cy="7" r="4" fill="#ffd76a" stroke="#c98a10" /><path d="M7 0v2M7 12v2M0 7h2M2 2l2 2M12 2l-2 2" stroke="#c98a10" />{REDX}</>],
  ["Sombras", <><circle cx="7" cy="6" r="4.500" fill="#e3f1fb" stroke="#2f7fd0" /><path d="M3 13h6" stroke="#555" strokeWidth="2" />{REDX}</>],
  ["Renderización", <><path d="M2 5h3l1-3 5 1v4l-5 6-4-3z" fill="#eee" />{BULB}</>],
  ["Recortar vista", <><path d="M1 12V9h3V4h11M4 12V8h7v6" stroke="#245d95" strokeWidth="1.600" /><path d="M7 8h5v5" stroke="#b0392c" /></>],
  ["Mostrar región", <><path d="M1 12V9h3V4h8M4 12h5M6 7h4v5" stroke="#245d95" strokeWidth="1.500" />{BULB}</>],
  ["Vista bloqueada", <>{HOUSEISH}<path d="M9 9h6v5H9zM10 9V7h4v2" fill="#ddd" /></>],
  ["Ocultar temporal", <><path d="M1 6l4 3M5 9a2.500 2.500 0 1 0 1 4l2-3 2-2a2.500 2.500 0 1 1 3 3M12 5l3-3" fill="none" /></>],
  ["Mostrar ocultos", <><path d="M8 3a3 3 0 1 1-.1 0M7 10v4h2v-4" stroke="#2f7fd0" fill="#d5e9fb" /></>],
  ["Propiedades temporales", <><path d="M1 3h12v11H1z" fill="#f4f4f4" strokeDasharray="2 1" /><path d="M5 7h8M5 10h8M9 7v6" strokeWidth="1.600" /></>],
  ["Modelo analítico", <><path d="M2 5h10v9M2 5v9M6 5v9M2 9h10M4 2h9" stroke="#b0392c" /><path d="M1 7h13M9 3v11" />{BULB}</>],
  ["Desplazamiento", <><path d="M1 5l4-3h6v8l-4 4H1zM1 5h6v9M7 5l4-3M11 4h4v8l-4 2" fill="#ddd" /></>],
  ["Restricciones", <><path d="M1 3h14M1 1v13M15 1v6M3 1L1 3l2 2M13 1l2 2-2 2M2 12h7" strokeDasharray="3 1" /><path d="M10 9h5v5h-5z" fill="#777" /></>],
];

function ViewArea() {
  return (
    <main className="flex min-w-0 flex-1 flex-col bg-white">
      <div className="flex h-5 items-stretch bg-[#cbcbcb] text-[11px]">
        <button type="button" className="flex w-[128px] items-center gap-2.5 pt-px pl-1 text-[#555]"><House className="h-4 w-4" faded />3D IE</button>
        <div className="flex w-[128px] items-center bg-white pt-px pr-[3px] pl-[5px]">
          <button type="button" className="flex flex-1 items-center gap-2 font-bold text-[#333]"><House className="h-4 w-4" />Vista 3D 1</button>
          <button type="button" aria-label="Cerrar Vista 3D 1" className="p-0.5"><Cross /></button>
        </div>
        <button type="button" aria-label="Lista de vistas" className="mr-1.5 ml-auto flex flex-col items-center justify-center gap-0.5"><span className="h-[2px] w-2 bg-[#333]" /><Caret className="h-1 w-2" /></button>
      </div>
      <div className="flex flex-1">
        <Canvas />
        <div className="mr-0.5 flex w-4 flex-col items-center justify-between bg-[#f1f1f1] pt-1.5 pb-1">
          <Chevron dir="up" />
          <div className="h-4 w-[15px] bg-[#cdcdcd]" />
          <Chevron dir="down" />
        </div>
      </div>
      <div className="mb-[3px] ml-0.5 flex h-4 items-center bg-[#efefef] text-[11px]">
        <button type="button" className="ml-6 w-[55px] text-left text-[#333]">1 : 100</button>
        <div className="flex items-center gap-[5px]">
          {VIEW_TOOLS.map(([n, icon]) => (
            <button key={n} type="button" aria-label={n}><Sm>{icon}</Sm></button>
          ))}
        </div>
        <div className="ml-1.5 flex flex-1 items-center justify-between">
          <Chevron dir="left" />
          <div className="h-4 w-4 bg-[#cdcdcd]" />
          <Chevron dir="right" />
        </div>
        <svg viewBox="0 0 10 10" className="mr-[3px] ml-2 h-[10px] w-[10px]" aria-hidden="true"><path d="M7 1h2v2H7zM7 4h2v2H7zM7 7h2v2H7zM4 4h2v2H4zM4 7h2v2H4zM1 7h2v2H1z" fill="#bbb" /></svg>
      </div>
    </main>
  );
}

/* ---------- Project browser ---------- */

type Item = { t: string; l: 0 | 1 | 2; x?: "+" | "-"; icon?: string; bold?: boolean; sel?: boolean; last?: boolean; first?: boolean };

function leafs(names: string[]): Item[] {
  return names.map((t, i) => ({ t, l: 2, last: i === names.length - 1, bold: t === "Vista 3D 1" }));
}

const TREE: Item[] = [
  { t: "Vistas (todo)", l: 0, x: "-", icon: "views", sel: true, first: true },
  { t: "Planos estructurales", l: 1, x: "+" },
  { t: "Planos de planta", l: 1, x: "-" },
  ...leafs(["Planimetría general", "PLANTA - 1° NIVEL", "PLANTA - 2° NIVEL", "PLANTA - 3° NIVEL", "PLANTA DE AZOTEA", "PLANTA DE TECHO", "PLANTA-CIMIENTO"]),
  { t: "Planos de techo", l: 1, x: "+" },
  { t: "Vistas 3D", l: 1, x: "-" },
  ...leafs(["3D-ESTRUCTURAS", "3D-TIPO DE CONCRETO", "INTERIOR COCINA", "INTERIOR DORMITORIO", "INTERIOR SALA", "Vista 3D 1", "Vista 3D 2", "Vista 3D 3", "{3D}"]),
  { t: "Alzados (Alzado 1)", l: 1, x: "-" },
  ...leafs(["ELEVACION FRONTAL", "ELEVACION POSTERIOR", "ELEVACIÓN LATERAL DERECHA", "ELEVACIÓN LATERAL IZQUIERDA"]),
  { t: "Secciones (Sección 1)", l: 1, x: "+" },
  { t: "Renderizaciones", l: 1, x: "+", last: true },
  { t: "Leyendas", l: 0, icon: "legend" },
  { t: "Tablas de planificación/Cantidades (todo)", l: 0, x: "-", icon: "table" },
  { t: "METRADO DE COLUMNAS", l: 1 },
  { t: "METRADO DE VIGAS", l: 1, last: true },
  { t: "Planos (todo)", l: 0, x: "-", icon: "sheet" },
  { t: "1 - PLANTA DE ARQUITECTURA 1-2", l: 1, x: "+" },
  { t: "2 - PLANTA DE ARQUITECTURA - AZOTEA TECHO", l: 1, x: "+" },
  { t: "3 - CORTES DE ARQUITECTURA", l: 1, x: "+" },
  { t: "5 - ELEVACIONES DE ARQUITECTURA", l: 1, x: "+" },
  { t: "7 - 3D MAQUETA DIGITAL", l: 1, x: "+" },
  { t: "8 - VISTAS DE RENDERS EXTERIORES", l: 1, x: "+" },
  { t: "9 - VISTAS DE RENDERS INTERIORES", l: 1, x: "+" },
  { t: "10 - TABLAS DE PLANIFICACIÓN", l: 1, x: "+", last: true },
  { t: "Familias", l: 0, x: "+", icon: "family" },
  { t: "Grupos", l: 0, x: "+", icon: "group" },
  { t: "Vínculos de Revit", l: 0, icon: "link", last: true },
];

const TREE_ICONS: Record<string, React.ReactNode> = {
  views: <><path d="M1 4V1h3M12 1h3v3M15 12v3h-3M4 15H1v-3" /><path d="M4 6l2-2h6v6l-2 2H4z" fill="#fff" /></>,
  legend: <><path d="M1 1h14v14H1z" fill="#f0f2f5" /><path d="M1 2h14" strokeWidth="2" /><path d="M3 6h3v3H3zM8 6h5M8 8h5M8 11h5M8 13h5" /><circle cx="4.500" cy="12" r="1" /></>,
  table: <><path d="M1 2h14v12H1z" fill="#f0f2f5" /><path d="M1 3h14" strokeWidth="2.500" /><path d="M1 7h14M1 10.500h14M5 4v10" /></>,
  sheet: <><path d="M1 2h11l3 3v9H1z" fill="#f0f2f5" /><path d="M3 5h5v3h3v4H3zM12 2v3h3" /></>,
  family: <><path d="M1 1h6v7H1zM10 1h5v14H1v-4h9z" fill="#e6e9ee" /></>,
  group: <><path d="M4 1H1v14h3M12 1h3v14h-3" /><circle cx="7" cy="7" r="3" fill="#aaa" /><path d="M7 7h5v5H7z" fill="#ccc" /></>,
  link: <><rect x="1" y="5.500" width="6.500" height="5" rx="2.200" stroke="#b88708" strokeWidth="2.400" /><rect x="8.500" y="5.500" width="6.500" height="5" rx="2.200" stroke="#b88708" strokeWidth="2.400" /><path d="M5 8h6" stroke="#b88708" strokeWidth="2.400" /><path d="M2 6.500h4M10 6.500h4M5 8h6" stroke="#f5cb3f" strokeWidth="1" /></>,
};

function Guide({ arm, end, start, box, name }: { arm?: boolean; end?: boolean; start?: boolean; box?: "+" | "-"; name?: string }) {
  return (
    <span className="relative flex h-[18px] w-5 shrink-0">
      <span className={"w-[10px] border-r border-dotted border-[#999] " + (end ? "h-[10px]" : start ? "mt-[10px] h-2" : "h-[18px]")} />
      {arm && <span className="h-[10px] w-[10px] border-b border-dotted border-[#999]" />}
      {box && (
        <button type="button" aria-label={(box === "+" ? "Expandir " : "Contraer ") + name} className="absolute top-[5px] left-[5px] h-[9px] w-[9px] border border-[#8f9db5] bg-white">
          <svg viewBox="0 0 7 7" className="block h-[7px] w-[7px]" aria-hidden="true"><path d={box === "+" ? "M1 3.500h5M3.500 1v5" : "M1 3.500h5"} stroke="#2a3c6a" /></svg>
        </button>
      )}
    </span>
  );
}

function TreeRow({ it }: { it: Item }) {
  return (
    <li className="flex h-[18px] items-center">
      {it.l === 0 ? <Guide arm start={it.first} end={it.last} box={it.x} name={it.t} /> : <Guide />}
      {it.l === 1 && <Guide arm end={it.last} box={it.x} name={it.t} />}
      {it.l === 2 && <Guide />}
      {it.l === 2 && <Guide arm end={it.last} />}
      {it.icon && <span className="ml-px"><Sm>{TREE_ICONS[it.icon]}</Sm></span>}
      {it.l > 0 && <span className="w-1 border-b border-dotted border-[#999]" />}
      <span className={"ml-[3px] h-[18px] leading-[17px] whitespace-nowrap " + (it.bold ? "font-bold " : "") + (it.sel ? "bg-[#e1e1e1] px-[3px]" : it.l === 0 ? "pl-[3px]" : "")}>{it.t}</span>
    </li>
  );
}

function Browser() {
  return (
    <aside className="flex w-[510px] shrink-0 flex-col bg-[#eee] text-[11px] text-[#111]">
      <div className="flex h-5 items-center justify-between pt-px pr-[3px] pl-[5px] text-[#555]">
        <h2>Navegador de proyectos - Arquitectura Sola</h2>
        <button type="button" aria-label="Cerrar navegador" className="p-0.5"><Cross /></button>
      </div>
      <ul className="mr-0.5 mb-0.5 ml-0.5 flex-1 bg-white">
        {TREE.map((it) => <TreeRow key={it.t + it.l} it={it} />)}
      </ul>
    </aside>
  );
}

/* ---------- Status bar ---------- */

const CURSOR = <path d="M8 6v8l2-2 1.500 3.500 1.500-.7L11.500 11.500H14z" fill="#fff" stroke="#333" strokeWidth="0.900" />;

const STATUS_TOOLS: [string, React.ReactNode][] = [
  ["Seleccionar vínculos", <><rect x="1" y="2" width="6" height="4" rx="2" stroke="#d9a414" strokeWidth="1.800" /><rect x="8.500" y="2" width="6" height="4" rx="2" stroke="#d9a414" strokeWidth="1.800" />{CURSOR}</>],
  ["Seleccionar subyacentes", <><path d="M1 11L8 4v7z" fill="#bfe0f7" stroke="#2f7fd0" /><path d="M1 14h8" stroke="#2f7fd0" /><path d="M9 1l6 5M15 1L9 6" stroke="#d01818" strokeWidth="2" />{CURSOR}</>],
  ["Seleccionar bloqueados", <><path d="M2 1h8v3H2zM3 4h6v4H3zM1 8h10v2H1zM6 10v5" fill="#f7a874" stroke="#b5561d" />{CURSOR}</>],
  ["Seleccionar por cara", <><path d="M2 4l5-2v10l-5 2z" fill="#bfe0f7" stroke="#2f7fd0" /><path d="M9 1l6 5M15 1L9 6" stroke="#d01818" strokeWidth="2" />{CURSOR}</>],
  ["Arrastrar elementos", <><path d="M5 0v10M0 5h10M4 1h2M4 9h2M1 4v2M9 4v2" strokeWidth="1.600" />{CURSOR}</>],
  ["Procesos", <circle cx="8" cy="8" r="5.500" stroke="#999" strokeWidth="3" strokeDasharray="3 1.300" />],
];

function StatusBar() {
  return (
    <footer className="flex h-7 items-center bg-[#cbcbcb] pb-0.5 text-[11px]">
      <p className="w-[850px] pl-[5px] text-black">Clic para seleccionar, TAB para alternar, CTRL para añadir y MAYÚS para anular una selección.</p>
      <button type="button" aria-label="Subproyectos"><Sm><path d="M5 3l3-2 4 2v4l-4 2-3-2z" fill="#cfe8b8" stroke="#3b7a28" /><path d="M1 8l3-2 4 2v5l-4 2-3-2z" fill="#9cccf3" stroke="#245d95" /><path d="M12 8v6M10.500 6v2h3V6" strokeWidth="1.500" /></Sm></button>
      <div className="relative ml-2 w-[204px]">
        <select aria-label="Subproyecto activo" className="block h-[18px] w-full appearance-none bg-white" />
        <span className="pointer-events-none absolute top-1 right-0.5"><Chevron dir="down" color="#aaa" className="block h-[10px] w-[10px]" /></span>
      </div>
      <button type="button" className="ml-2 flex items-center gap-1 text-[#333]"><Sm><path d="M4 2h9l2 3H6v3l-4 6h3l4-5" fill="#ddd" stroke="#888" /></Sm>:0</button>
      <button type="button" aria-label="Opciones de diseño" className="ml-6"><Sm><path d="M1 1h14v14H1z" fill="#f0f2f5" /><path d="M1 3h14" strokeWidth="1.500" /><path d="M3 7h2M7 7h2M7 10h6M7 13h6" strokeWidth="1.500" /></Sm></button>
      <button type="button" aria-label="Añadir al conjunto" className="mr-2 ml-2.5"><Sm><path d="M3 1h12v12H3z" fill="#999" stroke="#999" /><path d="M1 13l5-5v3h5v4z" fill="#eee" stroke="#999" /></Sm></button>
      <div className="relative w-[204px]">
        <select aria-label="Opción de diseño" className="block h-[18px] w-full appearance-none bg-white pl-0.5 text-[#888]"><option>Modelo base</option></select>
        <span className="pointer-events-none absolute top-1 right-0.5"><Chevron dir="down" color="#aaa" className="block h-[10px] w-[10px]" /></span>
      </div>
      <div className="mr-[94px] ml-auto flex items-center gap-[10px]">
        {STATUS_TOOLS.map(([n, icon]) => (
          <button key={n} type="button" aria-label={n}><Sm>{icon}</Sm></button>
        ))}
        <button type="button" className="flex items-center text-[#444]"><Sm><path d="M1 1h14l-5 6v7l-4-2V7z" fill="#c3c7cf" /></Sm>:0</button>
      </div>
    </footer>
  );
}

/* ---------- Window behind and taskbar ---------- */

function BehindRight() {
  return (
    <div className="flex w-5 shrink-0 flex-col bg-[#e9e9e9]">
      <div className="h-[34px] bg-[#dccfcf]" />
      <div className="h-9 bg-white" />
      <div className="flex h-[47px] items-center bg-[#7a2be0]"><span className="h-9 w-3.5 rounded-r-md bg-white" /></div>
      <div className="flex h-[38px] items-center border-b border-[#ccc] bg-white">
        <Sm className="h-4 w-3"><path d="M0 3h14M4 3V1h6v2M12 3v12H1V3M6 6v7M9 6v7" stroke="#222" strokeWidth="1.500" /></Sm>
      </div>
      <div className="flex h-[678px] flex-col items-center justify-between py-2 pl-1"><Caret className="h-1 w-2 rotate-180" color="#999" /><Caret className="h-1 w-2" color="#888" /></div>
      <div className="my-1 h-[18px] bg-[#c9c9c9]" />
      <div className="mt-3 flex h-[50px] flex-col justify-between bg-[#f4f4f4]"><span className="h-1 bg-[#cfd8d6]" /><span className="ml-2 h-7 w-2 border border-[#bbb]" /><span className="h-[2px] bg-[#888]" /></div>
      <div className="mt-3 flex h-[22px] items-center justify-center bg-[#dedede]"><Caret className="h-1 w-2 -rotate-90" color="#333" /></div>
      <div className="flex flex-1 flex-col justify-between bg-white pt-1 pb-1">
        <svg viewBox="0 0 16 16" className="-ml-1 h-4 w-4" aria-hidden="true"><circle cx="8" cy="8" r="7" fill="none" stroke="#333" strokeWidth="1.500" /><text x="8" y="12" textAnchor="middle" fontSize="11" fontFamily="Open Sans" fill="#333">?</text></svg>
        <span className="h-px bg-[#bbb]" />
        <Cross className="-ml-1 h-[10px] w-[10px]" />
      </div>
    </div>
  );
}

function Tile({ bg, fg, text, ring }: { bg: string; fg: string; text: string; ring?: string }) {
  return (
    <svg viewBox="0 0 24 24" className="h-6 w-6 overflow-visible" aria-hidden="true">
      <rect x="1" y="1" width="22" height="22" rx={ring ? 4 : 0} fill={bg} stroke={ring ?? bg} strokeWidth="1.500" />
      <text x="12" y={text.length > 1 ? 16 : 18} textAnchor="middle" fontFamily="Open Sans, sans-serif" fontWeight="800" fontSize={text.length > 1 ? 11 : 17} fill={fg}>{text}</text>
    </svg>
  );
}

function Ico({ children }: Kids) {
  return <svg viewBox="0 0 24 24" className="h-6 w-6" aria-hidden="true">{children}</svg>;
}

const APPS: { n: string; run?: boolean; stack?: boolean; active?: boolean; icon: React.ReactNode }[] = [
  { n: "Edge", run: true, icon: <Ico><circle cx="12" cy="12" r="11.500" fill="#1c76c9" /><path d="M1 10C2 3 8 0 13 .5c7 .5 11 6 10.500 11C23 15 19 17 15 15c2-5-2-8-6-7-5 0-7 2-8 2z" fill="#45c678" /><path d="M1 10c4-5 14-3 13 3-6-2-9 4-4 10C3 22 0 16 1 10z" fill="#1e9ae0" /><path d="M14 13c-4 1-3 6 3 6 3 0 5-1 6-2-2 5-8 7-12 6-5-4-4-11 3-10z" fill="#124f97" /></Ico> },
  { n: "Explorador", run: true, stack: true, icon: <Ico><path d="M1 3h8l2 2h12v5H1z" fill="#e8a820" /><path d="M1 7h22v14H1z" fill="#fcd35c" /><path d="M5 21v-8h14v8h-4v-4H9v4z" fill="#3d8ed8" /></Ico> },
  { n: "Store", icon: <Ico><path d="M7 6V1.500h10V6" stroke="#2c9de3" strokeWidth="2.200" fill="none" /><rect x="1" y="5" width="22" height="18" rx="2.500" fill="#f7f7f7" /><path d="M7 9h4.500v4.500H7z" fill="#f25022" /><path d="M12.500 9H17v4.500h-4.500z" fill="#7fba00" /><path d="M7 14.500h4.500V19H7z" fill="#00a4ef" /><path d="M12.500 14.500H17V19h-4.500z" fill="#ffb900" /></Ico> },
  { n: "Acrobat", run: true, icon: <Ico><rect x="1.500" y="1" width="21" height="22" rx="4" fill="#0a1930" /><path d="M12 5c-1 0-1 3 1 7s5 4 5 2.500-6-1.500-11 1c-2 1-1 3 1 1 3-3 5-8 5-10 0-1-.5-1.500-1-1.500z" fill="none" stroke="#fff" strokeWidth="1.500" /></Ico> },
  { n: "Spotify", run: true, icon: <Ico><circle cx="12" cy="12" r="11.500" fill="#1ed760" /><path d="M5 8c5-1.500 10-1 14 1.500M6 12c4-1 8-.5 11.500 1.500M7 15.500c3-.8 6-.4 9 1.200" stroke="#111" strokeWidth="2" fill="none" strokeLinecap="round" /></Ico> },
  { n: "Chrome", run: true, icon: <Ico><circle cx="12" cy="12" r="11.500" fill="#fbc116" /><path d="M12 .5c4.500 0 8 2.300 10 6H12L7 15 2 6.500A11.500 11.500 0 0 1 12 .5z" fill="#e33b2e" /><path d="M2 6.500L8 16l5 1-3.500 6.300A11.500 11.500 0 0 1 2 6.500z" fill="#2da94f" /><circle cx="12" cy="12" r="5.500" fill="#fff" /><circle cx="12" cy="12" r="4.200" fill="#4285f4" /></Ico> },
  { n: "Correo", run: true, icon: <Ico><path d="M0 9L12 1l12 8v14H0z" fill="#0f5fae" /><path d="M3 8h18v8H3z" fill="#f2f2f2" /><path d="M0 9l12 8 12-8v14H0z" fill="#2aa5e8" /><path d="M0 23L12 14l-12-5z" fill="#1a85d0" /></Ico> },
  { n: "PowerPoint", icon: <Ico><circle cx="13" cy="12" r="10.500" fill="#e8593a" /><path d="M13 1.500A10.500 10.500 0 0 1 23.500 12H13z" fill="#f5916f" /><rect x="0" y="6" width="12" height="12" rx="1.500" fill="#c33b1c" /><text x="6" y="15.500" textAnchor="middle" fontSize="10" fontWeight="700" fontFamily="Open Sans" fill="#fff">P</text></Ico> },
  { n: "SketchUp", icon: <Ico><path d="M0 0h24v24H0z" fill="#e9f0f6" /><g fill="none" stroke="#1c66a8" strokeWidth="2"><path d="M4.500 8.500v-1L12 3.500l7.500 4v8L12 20v-4l4-2.500v-3L12 8l-7.500 3.500" /><path d="M4.500 11.500l7.500 4.500M4.500 15.500L12 20M8 10l4 2.500" /></g></Ico> },
  { n: "Photoshop", icon: <Tile bg="#06222f" fg="#e6f6ff" text="Ps" ring="#2fa6dc" /> },
  { n: "S10", icon: <Ico><path d="M0 0h24v24H0z" fill="#47758a" /><path d="M1 14c8-1 15-4 22-10M1 1h22v22H1z" stroke="#9fc0cd" strokeWidth="1" fill="none" /><path d="M11 11C8 9 7 6 8 3c3 2 4 5 3 8zM13 10c1-3 3-5 7-5-1 3-4 5-7 5z" fill="#eef5f8" /><text x="12" y="21" textAnchor="middle" fontSize="10" fontWeight="700" fontFamily="Open Sans" fill="#fff">8</text></Ico> },
  { n: "AutoCAD", run: true, stack: true, icon: <Tile bg="#f1efef" fg="#b3222b" text="A" /> },
  { n: "Fotos", run: true, icon: <Ico><path d="M1 1h22v22H1z" fill="#2d8fe6" /><path d="M1 17L9 8l14 15H1z" fill="#14357c" /><path d="M12 14l4-4 7 8v5z" fill="#7d7fe0" /><circle cx="16" cy="6" r="2" fill="#fff" /></Ico> },
  { n: "Revit", run: true, active: true, icon: <Tile bg="#dbe9f6" fg="#2a5f9e" text="R" /> },
];

function Taskbar() {
  return (
    <footer className="flex h-10 items-stretch bg-linear-to-r from-[#434632] from-0% via-[#3a2b22] via-30% to-[#3a3a3d] to-100% text-white">
      <button type="button" aria-label="Inicio" className="flex w-12 items-center justify-center">
        <svg viewBox="0 0 16 16" className="h-4 w-4" aria-hidden="true"><path d="M0 2.200L7 1.200V7.600H0zM8 1.100L16 0v7.600H8zM0 8.400h7v6.400L0 13.800zM8 8.400h8V16l-8-1.100z" fill="#fff" /></svg>
      </button>
      <label className="flex w-[344px] items-center gap-3 border border-[#b9b9b9] bg-[#f2f2f2] pl-[11px]">
        <svg viewBox="0 0 16 16" className="h-4 w-4" aria-hidden="true"><circle cx="10" cy="6" r="5" fill="none" stroke="#222" strokeWidth="1.300" /><path d="M6.500 9.500L1 15" stroke="#222" strokeWidth="1.300" /></svg>
        <input type="text" aria-label="Buscar" placeholder="Escribe aquí para buscar" className="w-72 bg-transparent text-[14px] placeholder:text-[#444]" />
      </label>
      <button type="button" aria-label="Vista de tareas" className="flex w-[50px] items-center justify-center">
        <svg viewBox="0 0 18 18" className="h-4 w-4" aria-hidden="true"><path d="M1 1v3h9V1M1 17v-3h9v3M1 6.500h9v5H1zM14 1v16M12.500 6.500h3v3h-3z" fill="none" stroke="#fff" strokeWidth="1.300" /></svg>
      </button>
      <nav className="flex flex-1 bg-linear-to-r from-[#3a2b22] from-0% via-[#20232a] via-65% to-[#2e2f31] to-100%" aria-label="Aplicaciones">
        {APPS.map((a) => (
          <button key={a.n} type="button" aria-label={a.n} className={"flex w-[49px] flex-col items-center justify-between pt-2 " + (a.active ? "bg-[#505560]" : "")}>
            {a.icon}
            <span className={"flex h-[3px] " + (a.active ? "w-full" : "w-10")}>
              {a.run && <span className="flex-1 bg-[#76b0e2]" />}
              {a.stack && <span className="w-2 bg-[#4c7aa3]" />}
            </span>
          </button>
        ))}
      </nav>
      <div className="flex items-center bg-linear-to-r from-[#2e332c] via-[#463a30] to-[#38383b] pr-1">
        <button type="button" className="flex items-center gap-2 text-[14px] whitespace-nowrap">
          <svg viewBox="0 0 26 22" className="h-[22px] w-[26px]" aria-hidden="true"><path d="M6 20a5 5 0 0 1-1-9.500A7 7 0 0 1 18 8a6 6 0 0 1 2 12z" fill="#a9c7f0" /><path d="M6 20a5 5 0 0 1-1-9.500c5-1 9 2 10 9.500z" fill="#c9dcf7" /><circle cx="22" cy="4" r="3.500" fill="#c8322b" /></svg>
          <span>23°C</span><span>Nublado</span>
        </button>
        <button type="button" aria-label="Iconos ocultos" className="ml-[15px]"><Chevron dir="up" color="#fff" className="block h-[14px] w-[14px]" /></button>
        <svg viewBox="0 0 16 18" className="ml-2.5 h-[18px] w-4" aria-hidden="true"><path d="M4 3c2-2 5-2 7 0M4 15c2 2 5 2 7 0M3 5.500h7v7H3zM10 8l3-2v6l-3-2" fill="none" stroke="#fff" strokeWidth="1.200" /></svg>
        <svg viewBox="0 0 16 16" className="ml-2 h-4 w-4" aria-hidden="true"><path d="M2 14A13 13 0 0 1 14 3M5 14a10 10 0 0 1 9-8M8 14a7 7 0 0 1 6-5" fill="none" stroke="#fff" strokeWidth="1.200" /><circle cx="13" cy="13" r="1.500" fill="#fff" /></svg>
        <svg viewBox="0 0 18 16" className="ml-1.5 h-4 w-[18px]" aria-hidden="true"><path d="M1 5.500h3L8 2v12l-4-3.500H1zM10.500 5.500c1 1.500 1 3.500 0 5M12.500 4c2 2.500 2 5.500 0 8" fill="none" stroke="#fff" strokeWidth="1.100" /><path d="M14.500 2c3 4 3 8 0 12" fill="none" stroke="#888" /></svg>
        <span className="ml-2.5 w-5 text-[11px]">ESP</span>
        <div className="ml-3 w-[62px] text-center text-[11px] leading-[18px]"><div>14:48</div><div>16/12/2022</div></div>
        <button type="button" aria-label="Notificaciones" className="relative mr-3 ml-4 h-6 w-6">
          <svg viewBox="0 0 24 24" className="h-6 w-6" aria-hidden="true"><path d="M1 2h16v13H8l-4 4v-4H1z" fill="#fff" /><path d="M4 5.500h10M4 8.500h10M4 11.500h7" stroke="#444" strokeWidth="1.200" /><circle cx="16.500" cy="16.500" r="7" fill="#3b3b3e" stroke="#aaa" /><text x="16.500" y="20.500" textAnchor="middle" fontSize="11" fontWeight="600" fontFamily="Open Sans" fill="#fff">6</text></svg>
        </button>
        <span className="h-full w-px bg-[#777]" />
      </div>
    </footer>
  );
}

export default function App() {
  return (
    <div className="flex min-h-screen flex-col overflow-hidden bg-white font-['Open_Sans','Noto_Sans',sans-serif]">
      <div className="flex flex-1">
        <div className="relative z-10 flex min-w-0 flex-1 flex-col bg-[#cbcbcb] shadow-[0_4px_16px_rgba(0,0,0,0.45)]">
          <TitleBar />
          <div className="pr-0.5 pl-1">
            <RibbonTabs />
            <Ribbon />
            <div className="h-[26px] bg-[#eee]" />
          </div>
          <div className="mt-0.5 flex flex-1 gap-0.5 pr-0.5 pl-1">
            <Properties />
            <ViewArea />
            <Browser />
          </div>
          <StatusBar />
        </div>
        <BehindRight />
      </div>
      <div className="flex h-5 items-start bg-white">
        <span className="ml-[236px] h-[14px] w-px bg-[#aaa]" />
        <span className="ml-[232px] h-[14px] w-px bg-[#aaa]" />
        <span className="mr-[37px] ml-auto h-1.5 w-[104px] rounded-b-md border border-t-0 border-[#bbb]" />
      </div>
      <Taskbar />
    </div>
  );
}
